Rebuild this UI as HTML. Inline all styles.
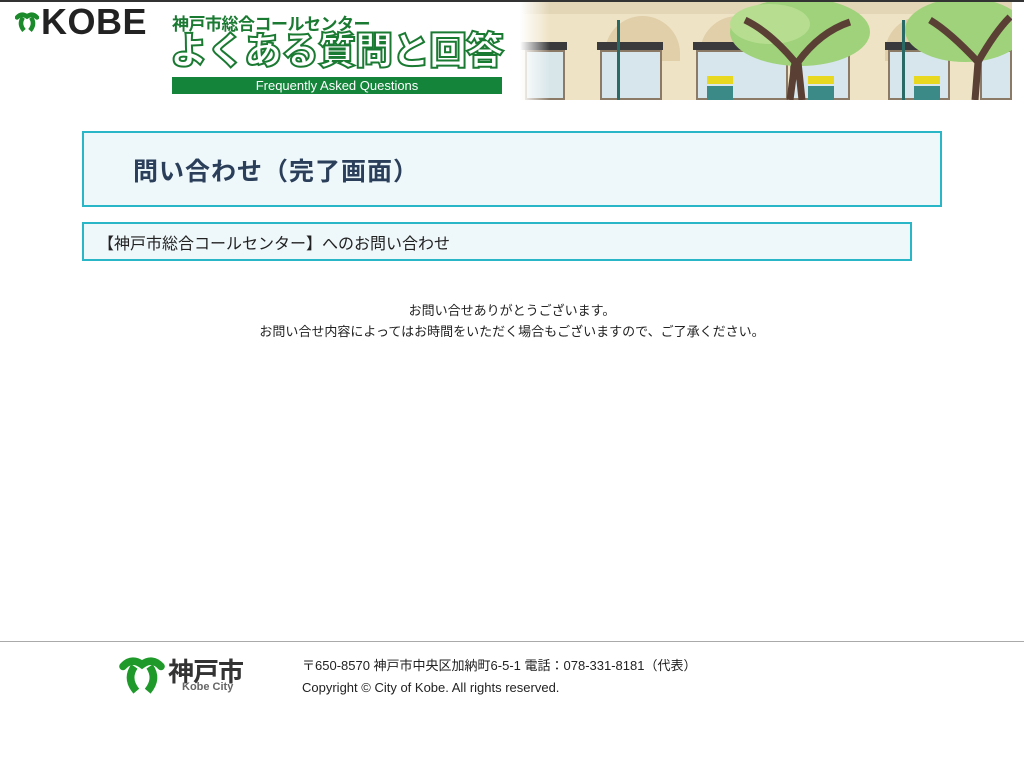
<!DOCTYPE html>
<html><head><meta charset="utf-8"><style>
*{margin:0;padding:0;box-sizing:border-box}
body{width:1024px;height:768px;background:#fff;font-family:"Liberation Sans","Noto Sans CJK JP",sans-serif;position:relative;overflow:hidden}
.abs{position:absolute}
</style></head><body>
<div class="abs" style="left:0;top:0;width:1024px;height:2px;background:#333"></div>
<!-- KOBE logo -->
<svg class="abs" style="left:15px;top:8px" width="24" height="28" viewBox="0 0 48 40">
<path d="M4 11 Q13 1 24 9 Q35 1 44 11" stroke="#1a8a2a" stroke-width="9" fill="none" stroke-linecap="round"/>
<path d="M16 11 Q7 24 18 37" stroke="#1a8a2a" stroke-width="9" fill="none"/>
<path d="M32 11 Q41 24 30 37" stroke="#1a8a2a" stroke-width="9" fill="none"/>
</svg>
<div class="abs" style="left:41px;top:3px;font:bold 36px/38px 'Liberation Sans',sans-serif;color:#222;letter-spacing:0.5px">KOBE</div>
<!-- title -->
<div class="abs" style="left:172px;top:10px;font-weight:bold;font-size:17px;color:#1a7a32;letter-spacing:-0.5px">神戸市総合コールセンター</div>
<div class="abs" style="left:170px;top:30px;font-weight:900;font-size:38px;line-height:44px;color:#fff;-webkit-text-stroke:2px #1a7a32;letter-spacing:-1px;white-space:nowrap">よくある質問と回答</div>
<div class="abs" style="left:172px;top:77px;width:330px;height:17px;background:#13843a;color:#fff;font-size:13px;text-align:center;line-height:17px">Frequently Asked Questions</div>
<!-- banner -->
<div class="abs" style="left:520px;top:2px;width:492px;height:98px;background:#efe3c6;overflow:hidden">
 <div class="abs" style="left:0;top:0;width:492px;height:12px;background:#e3d6b6"></div>
 <div class="abs" style="left:85px;top:14px;width:75px;height:45px;border-radius:38px 38px 0 0;background:#e0cfa8"></div>
 <div class="abs" style="left:180px;top:14px;width:75px;height:45px;border-radius:38px 38px 0 0;background:#e0cfa8"></div>
 <div class="abs" style="left:365px;top:14px;width:75px;height:45px;border-radius:38px 38px 0 0;background:#e0cfa8"></div>
 <div class="abs" style="left:0;top:40px;width:47px;height:8px;background:#3a3a3c"></div>
 <div class="abs" style="left:5px;top:48px;width:40px;height:50px;background:#d8e6ea;border:2px solid #8a7a66"></div>
 <div class="abs" style="left:77px;top:40px;width:66px;height:8px;background:#3a3a3c"></div>
 <div class="abs" style="left:80px;top:48px;width:62px;height:50px;background:#d6e6ec;border:2px solid #8a7a66"></div>
 <div class="abs" style="left:173px;top:40px;width:66px;height:8px;background:#3a3a3c"></div>
 <div class="abs" style="left:176px;top:48px;width:92px;height:50px;background:#d6e6ec;border:2px solid #8a7a66"></div>
 <div class="abs" style="left:270px;top:48px;width:60px;height:50px;background:#d6e6ec;border:2px solid #8a7a66"></div>
 <div class="abs" style="left:365px;top:40px;width:66px;height:8px;background:#3a3a3c"></div>
 <div class="abs" style="left:368px;top:48px;width:62px;height:50px;background:#d6e6ec;border:2px solid #8a7a66"></div>
 <div class="abs" style="left:460px;top:48px;width:32px;height:50px;background:#d6e6ec;border:2px solid #8a7a66"></div>
 <div class="abs" style="left:97px;top:18px;width:3px;height:80px;background:#2a6a66"></div>
 <div class="abs" style="left:382px;top:18px;width:3px;height:80px;background:#2a6a66"></div>
 <svg class="abs" style="left:0;top:0" width="492" height="98">
  <ellipse cx="280" cy="30" rx="70" ry="34" fill="#9fd27a"/>
  <ellipse cx="250" cy="22" rx="40" ry="20" fill="#b7de90"/>
  <ellipse cx="445" cy="28" rx="60" ry="32" fill="#9fd27a"/>
  <path d="M270 98 L275 60 Q250 30 225 18 M278 60 Q300 30 330 20 M278 60 L282 98" stroke="#5a4034" stroke-width="7" fill="none"/>
  <path d="M455 98 L458 60 Q430 30 410 18 M458 60 Q475 30 490 15" stroke="#5a4034" stroke-width="7" fill="none"/>
  <rect x="187" y="84" width="26" height="14" fill="#3c8a88"/>
  <rect x="288" y="84" width="26" height="14" fill="#3c8a88"/>
  <rect x="394" y="84" width="26" height="14" fill="#3c8a88"/>
  <rect x="187" y="74" width="26" height="8" fill="#e8d820"/>
  <rect x="288" y="74" width="26" height="8" fill="#e8d820"/>
  <rect x="394" y="74" width="26" height="8" fill="#e8d820"/>
 </svg>
 <div class="abs" style="left:0;top:0;width:30px;height:98px;background:linear-gradient(90deg,#fff,rgba(255,255,255,0))"></div>
</div>
<!-- heading box -->
<div class="abs" style="left:82px;top:131px;width:860px;height:76px;background:#eef7fa;border:2px solid #29b6c6"></div>
<div class="abs" style="left:133px;top:152px;font-weight:bold;font-size:25px;color:#2b3f5a;letter-spacing:1px">問い合わせ（完了画面）</div>
<div class="abs" style="left:82px;top:222px;width:830px;height:39px;background:#eef7fa;border:2px solid #29b6c6"></div>
<div class="abs" style="left:98px;top:230px;font-size:16px;color:#222">【神戸市総合コールセンター】へのお問い合わせ</div>
<div class="abs" style="left:0;top:300px;width:1024px;text-align:center;font-size:13px;line-height:21px;color:#222">お問い合せありがとうございます。<br>お問い合せ内容によってはお時間をいただく場合もございますので、ご了承ください。</div>
<!-- footer -->
<div class="abs" style="left:0;top:641px;width:1024px;height:1px;background:#aaa"></div>
<svg class="abs" style="left:118px;top:656px" width="48" height="38" viewBox="0 0 48 40">
<path d="M4 11 Q13 1 24 9 Q35 1 44 11" stroke="#1f9a2a" stroke-width="8" fill="none" stroke-linecap="round"/>
<path d="M16 11 Q7 24 18 37" stroke="#1f9a2a" stroke-width="8" fill="none"/>
<path d="M32 11 Q41 24 30 37" stroke="#1f9a2a" stroke-width="8" fill="none"/>
</svg>
<div class="abs" style="left:168px;top:652px;font-size:26px;font-weight:bold;color:#333;letter-spacing:-1px">神戸市</div>
<div class="abs" style="left:182px;top:681px;font-size:11px;color:#666;font-weight:bold">Kobe City</div>
<div class="abs" style="left:302px;top:655px;font-size:13px;color:#222;line-height:22px">〒650-8570 神戸市中央区加納町6-5-1 電話：078-331-8181（代表）<br>Copyright © City of Kobe. All rights reserved.</div>
</body></html>
